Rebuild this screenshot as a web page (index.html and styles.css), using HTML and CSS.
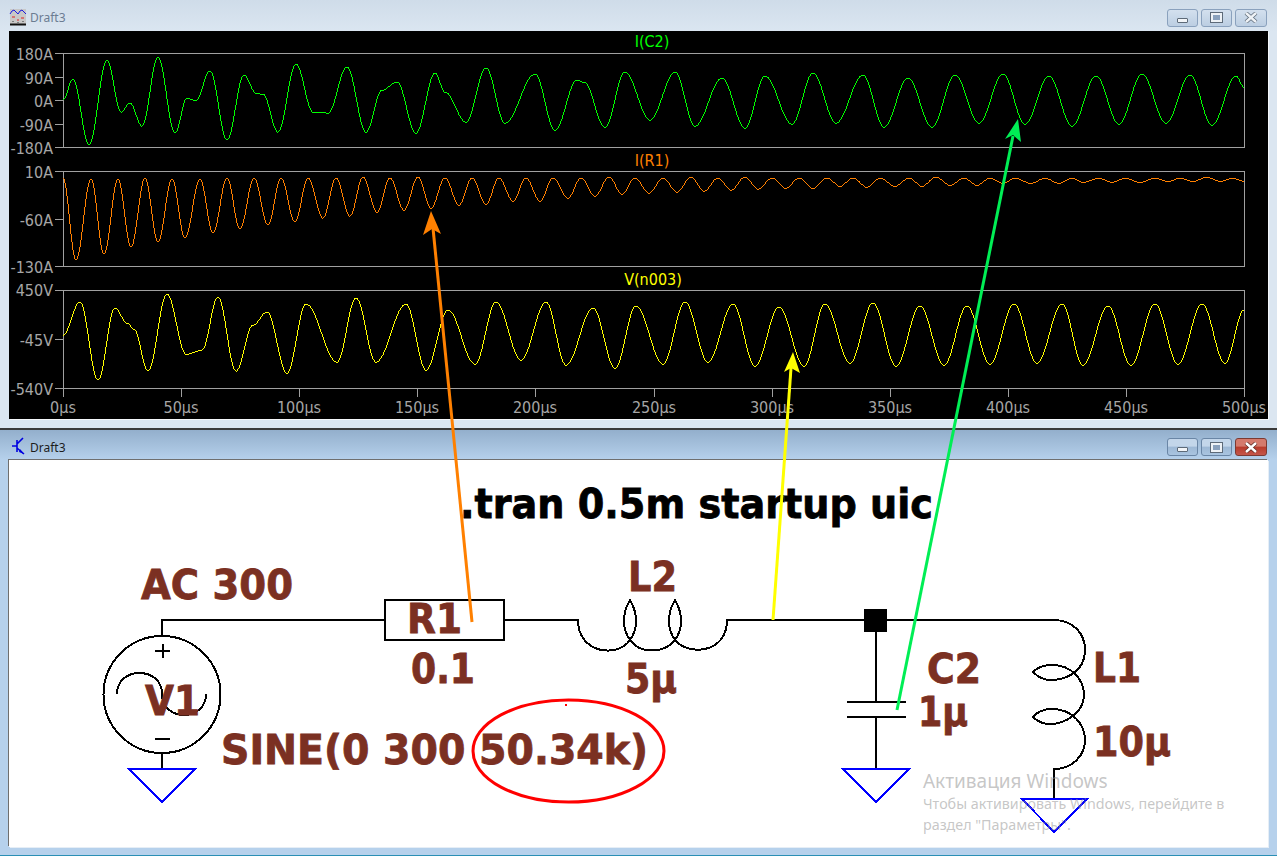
FILE: index.html
```html
<!DOCTYPE html>
<html lang="en">
<head>
  <meta charset="UTF-8" />
  <meta name="viewport" content="width=device-width, initial-scale=1" />
  <title>Draft3</title>
  <link rel="stylesheet" href="styles.css">
</head>
<body>

  <!-- Waveform viewer -->
  <section class="window window-inactive">
    <header class="titlebar">
      <svg class="title-icon" width="18" height="18" viewBox="0 0 18 18">
        <rect x="1" y="1" width="16" height="15" fill="#c8c8c8" />
        <path d="M1 6 L3 3 L5 2 L7 4 L9 6 L11 3 L13 2 L15 4 L17 6" fill="none" stroke="#1a1ae0" />
        <path d="M3 9 H6 M8 12 H10 M12 10 H15" stroke="#e02020" />
        <path d="M1 16.5 H17" stroke="#111" stroke-width="2" />
        <path d="M4 13 V14 M9 14 V15 M14 13 V14" stroke="#333" />
      </svg>
      <span class="title-text">Draft3</span>
      <div class="controls">
        <button class="ctl"><span class="glyph-min"></span></button>
        <button class="ctl"><span class="glyph-max"></span></button>
        <button class="ctl ctl-close">
          <svg width="16" height="11" viewBox="0 0 16 11"><path d="M3 1 L13 10 M13 1 L3 10" stroke="#5d6a78" stroke-width="4" /><path d="M3 1 L13 10 M13 1 L3 10" stroke="#eef2f6" stroke-width="2.4" /></svg>
        </button>
      </div>
    </header>
    <div class="client client-plot">
      <svg class="canvas" width="1258" height="388" viewBox="9 31 1258 388">
        <!-- frames -->
        <g class="axis">
          <rect x="63.5" y="53.5" width="1181" height="94" />
          <rect x="63.5" y="171.5" width="1181" height="95" />
          <rect x="63.5" y="290.5" width="1181" height="98" />
          <path d="M55 53.5H63 M55 77.5H63 M55 100.5H63 M55 124.5H63 M55 147.5H63" />
          <path d="M55 171.5H63 M55 219.5H63 M55 266.5H63" />
          <path d="M55 290.5H63 M55 339.5H63 M55 388.5H63" />
          <path d="M63.5 388V397 M181.5 388V397 M299.5 388V397 M417.5 388V397 M535.5 388V397 M654.5 388V397 M772.5 388V397 M890.5 388V397 M1008.5 388V397 M1126.5 388V397 M1244.5 388V397" />
        </g>

        <path id="traceC2" class="trace" stroke="#00ff00" />
        <path id="traceR1" class="trace" stroke="#ff8000" />
        <path id="traceN003" class="trace" stroke="#ffff00" />

        <g class="plot-label plot-title">
          <text x="652" y="47" fill="#00ff00">I(C2)</text>
          <text x="652" y="166" fill="#ff8000">I(R1)</text>
          <text x="653" y="285" fill="#ffff00">V(n003)</text>
        </g>
        <g class="plot-label y-label">
          <text x="53" y="60">180A</text>
          <text x="53" y="84">90A</text>
          <text x="53" y="107">0A</text>
          <text x="53" y="131">-90A</text>
          <text x="53" y="154">-180A</text>
          <text x="53" y="178">10A</text>
          <text x="53" y="226">-60A</text>
          <text x="53" y="273">-130A</text>
          <text x="53" y="296">450V</text>
          <text x="53" y="346">-45V</text>
          <text x="53" y="395">-540V</text>
        </g>
        <g class="plot-label x-label">
          <text x="63" y="413">0µs</text>
          <text x="181" y="413">50µs</text>
          <text x="299" y="413">100µs</text>
          <text x="417" y="413">150µs</text>
          <text x="535" y="413">200µs</text>
          <text x="654" y="413">250µs</text>
          <text x="772" y="413">300µs</text>
          <text x="890" y="413">350µs</text>
          <text x="1008" y="413">400µs</text>
          <text x="1126" y="413">450µs</text>
          <text x="1244" y="413">500µs</text>
        </g>
      </svg>
    </div>
  </section>

  <!-- Schematic editor -->
  <section class="window window-active">
    <header class="titlebar">
      <svg class="title-icon" width="18" height="18" viewBox="0 0 18 18">
        <path d="M3 9 H8 M8 3 V15 M8 7 L14 1 M8 11 L15 17" fill="none" stroke="#0000e0" stroke-width="1.6" />
        <path d="M11 12 L15 17 L10 15 Z" fill="#0000e0" />
      </svg>
      <span class="title-text">Draft3</span>
      <div class="controls">
        <button class="ctl"><span class="glyph-min"></span></button>
        <button class="ctl"><span class="glyph-max"></span></button>
        <button class="ctl ctl-close">
          <svg width="16" height="11" viewBox="0 0 16 11"><path d="M3 1 L13 10 M13 1 L3 10" stroke="#5d2a22" stroke-width="4" /><path d="M3 1 L13 10 M13 1 L3 10" stroke="#fff" stroke-width="2.4" /></svg>
        </button>
      </div>
    </header>
    <div class="client client-sheet">
      <svg class="canvas" width="1258" height="387" viewBox="9 460 1258 387">
        <g class="wire">
          <path d="M385 620 H162 V636 M162 753 V769" />
          <circle cx="162" cy="694.5" r="58.5" />
          <path d="M155 651 H170 M162.500 644 V658 M155 739 H170" />
          <path d="M117 694 C117 666 162 666 162 694 C162 722 206 722 206 694" />
          <rect x="385" y="600" width="119" height="40" />
          <!-- L2 -->
          <path d="M504 620 H578 C578 654 618 658 630 640 C640 626 636 610 630 600 C624 610 620 626 630 640 C640 654 664 654 675 640 C685 626 681 610 675 600 C669 610 665 626 675 640 C688 656 727 654 727 620 H1053" />
          <!-- L1 -->
          <path d="M1053 620 C1074 620 1085 634 1085 650 C1085 672 1066 680 1050 680 C1042 680 1037 676 1033 672 C1037 668 1044 665 1052 665 C1072 665 1084 680 1084 695 C1084 712 1066 724 1050 724 C1042 724 1037 721 1033 717 C1037 712 1044 709 1052 709 C1072 709 1085 724 1085 740 C1085 756 1072 769 1054 769 V799" />
          <!-- C2 -->
          <path d="M875.500 620 V702 M847 702 H906 M847 717 H906 M875.500 717 V769" />
        </g>
        <rect class="junction" x="864" y="609" width="23" height="23" />

        <g class="ground">
          <path d="M129 769 H195 L162 802 Z" />
          <path d="M843 769 H909 L876 802 Z" />
          <path d="M1022 799 H1087 L1054 832 Z" />
        </g>

        <ellipse class="marker" cx="568.500" cy="751" rx="95.500" ry="51" />
        <rect x="565" y="704" width="2" height="2" fill="#ff0000" />

        <text class="directive" x="460" y="518" textLength="473" lengthAdjust="spacingAndGlyphs">.tran 0.5m startup uic</text>
        <g class="part-label">
          <text x="141" y="599" textLength="152" lengthAdjust="spacingAndGlyphs">AC 300</text>
          <text x="407" y="633" textLength="55" lengthAdjust="spacingAndGlyphs">R1</text>
          <text x="411" y="683" textLength="64" lengthAdjust="spacingAndGlyphs">0.1</text>
          <text x="628" y="591" textLength="49" lengthAdjust="spacingAndGlyphs">L2</text>
          <text x="625" y="693" textLength="52" lengthAdjust="spacingAndGlyphs">5µ</text>
          <text x="145" y="715" textLength="55" lengthAdjust="spacingAndGlyphs">V1</text>
          <text x="221" y="764" textLength="427" lengthAdjust="spacingAndGlyphs">SINE(0 300 50.34k)</text>
          <text x="927" y="683" textLength="54" lengthAdjust="spacingAndGlyphs">C2</text>
          <text x="918" y="726" textLength="50" lengthAdjust="spacingAndGlyphs">1µ</text>
          <text x="1093" y="682" textLength="48" lengthAdjust="spacingAndGlyphs">L1</text>
          <text x="1093" y="756" textLength="78" lengthAdjust="spacingAndGlyphs">10µ</text>
        </g>
      </svg>
    </div>
  </section>

  <!-- Probe arrows run across both windows -->
  <svg class="probes" width="1277" height="856" viewBox="0 0 1277 856">
    <path d="M472 622 L433 228" stroke="#ff8000" />
    <path d="M431 211 L441 234 L432 229 L423 235 Z" fill="#ff8000" />
    <path d="M773 620 L791 368" stroke="#ffff00" />
    <path d="M793 352 L800 373 L791 368 L784 372 Z" fill="#ffff00" />
    <path d="M897 710 L1013 136" stroke="#00ee55" />
    <path d="M1018 119 L1021 142 L1013 135 L1005 139 Z" fill="#00ee55" />
  </svg>

  <div class="activation">
    <div class="activation-title">Активация Windows</div>
    <div>Чтобы активировать Windows, перейдите в</div>
    <div>раздел "Параметры".</div>
  </div>

  <script src="waveforms.js"></script>
</body>
</html>
```

FILE: styles.css
```css
html, body {
  margin: 0;
  padding: 0;
}

body {
  position: relative;
  display: flex;
  flex-direction: column;
  gap: 2px;
  width: 1277px;
  height: 856px;
  overflow: hidden;
  background-color: #3a3a3a;
  font-family: 'Noto Sans', 'Open Sans', sans-serif;
}

.window {
  display: flex;
  flex-direction: column;
  box-sizing: border-box;
  padding: 0 9px;
}

.window-inactive {
  height: 428px;
  background: linear-gradient(#cfdce9 0, #dbe6f1 32px);
}

.window-active {
  height: 426px;
  background: linear-gradient(#93afcc 0, #b6d1ec 30px);
  border-bottom: 1px solid #2a8fb5;
}

.titlebar {
  display: flex;
  align-items: center;
  gap: 3px;
  flex-shrink: 0;
}

.window-inactive .titlebar {
  height: 31px;
}

.window-active .titlebar {
  height: 30px;
}

.title-text {
  font-size: 12px;
  padding-top: 4px;
}

.window-inactive .title-text {
  color: #6b7c92;
}

.window-active .title-text {
  color: #1c1c1c;
}

.title-icon {
  flex-shrink: 0;
  margin-top: 2px;
}

.controls {
  display: flex;
  gap: 3px;
  margin-left: auto;
  margin-right: 1px;
  padding-top: 4px;
}

.ctl {
  display: flex;
  align-items: center;
  justify-content: center;
  box-sizing: border-box;
  width: 31px;
  height: 18px;
  padding: 0;
  border: 1px solid #8aa1bd;
  border-radius: 3px;
  background: linear-gradient(#d3e0ee, #bccee2);
}

.window-active .ctl {
  border-color: #6a86a6;
  background: linear-gradient(#c3d6ea 45%, #9db8d5 50%, #a9c4e0);
}

.window-active .ctl-close {
  width: 32px;
  border-color: #7c3a32;
  background: linear-gradient(#d47a6c 45%, #b83a2a 50%, #c4564a);
}

.window-inactive .ctl-close {
  width: 32px;
}

.glyph-min {
  display: block;
  box-sizing: border-box;
  width: 11px;
  height: 5px;
  margin-top: 5px;
  border: 1px solid #5d6a78;
  border-radius: 1px;
  background: #f2f5f8;
}

.glyph-max {
  display: block;
  box-sizing: border-box;
  width: 11px;
  height: 9px;
  border: 2px solid #eef2f6;
  outline: 1px solid #5d6a78;
  background: #8aa1bd;
}

.client {
  flex-shrink: 0;
  line-height: 0;
}

.client-plot {
  height: 388px;
  background-color: #000;
  box-shadow: 1px 1px 0 #f4f7fa;
}

.client-sheet {
  height: 387px;
  background-color: #fff;
  box-shadow: -1px -1px 0 #6f6f6f, 1px 1px 0 #e6eef6;
}

.canvas {
  display: block;
}

/* plot pane */
.axis rect,
.axis path {
  fill: none;
  stroke: #a0a0a0;
  stroke-width: 1;
  shape-rendering: crispEdges;
}

.trace {
  fill: none;
  stroke-width: 1;
  shape-rendering: crispEdges;
}

.plot-label {
  font-family: 'DejaVu Sans', sans-serif;
  font-size: 16px;
  font-stretch: condensed;
}

.plot-title,
.x-label {
  text-anchor: middle;
}

.y-label {
  text-anchor: end;
}

.y-label,
.x-label {
  fill: #a6a6a6;
}

/* schematic pane */
.wire * {
  fill: none;
  stroke: #000;
  stroke-width: 2;
  shape-rendering: crispEdges;
}

.junction {
  fill: #000;
}

.ground path {
  fill: none;
  stroke: #0000ff;
  stroke-width: 2;
  shape-rendering: crispEdges;
}

.marker {
  fill: none;
  stroke: #ff0000;
  stroke-width: 3;
}

.directive,
.part-label {
  font-family: 'DejaVu Sans', sans-serif;
  font-size: 40px;
  font-weight: bold;
  stroke-width: 0.8;
}

.directive {
  fill: #000;
  stroke: #000;
}

.part-label {
  fill: #7b3022;
  stroke: #7b3022;
}

/* overlays */
.probes {
  position: absolute;
  top: 0;
  left: 0;
  pointer-events: none;
}

.probes path {
  stroke-width: 3;
}

.probes path[fill] {
  stroke-width: 0;
}

.activation {
  position: absolute;
  top: 769px;
  left: 923px;
  font-size: 14.3px;
  line-height: 21px;
  color: rgba(150, 150, 150, 0.55);
  white-space: nowrap;
}

.activation-title {
  font-size: 19px;
  line-height: 24px;
}
```

FILE: waveforms.js
```js
// Turning points of each trace, as [x, y] in window pixels
const traces = {
  traceC2: [
    [63,100],[73,79],[89,145],[107,60],[121,112],[130,103],[142,126],[158,57],[175,133],[187,98],[196,100],
    [210,71],[227,140],[244,75],[256,93],[263,94],[278,132],[296,64],[313,112],[323,112],[328,113],[347,67],
    [366,132],[382,90],[397,82],[416,133],[435,73],[445,92],[466,122],[486,68],[505,123],[535,74],[555,130],
    [577,80],[584,82],[605,127],[625,72],[650,120],[675,72],[695,126],[722,78],[745,128],[765,76],[792,124],
    [813,73],[836,123],[863,75],[884,127],[908,78],[932,127],[955,75],[979,123],[1003,74],[1025,124],[1049,76],
    [1072,126],[1096,76],[1119,124],[1142,74],[1166,123],[1190,75],[1212,125],[1236,76],[1244,87]
  ],
  traceR1: [
    [63,178],[76,260],[91,179],[104,254],[118,179],[131,247],[145,178],[158,242],[172,179],[185,238],[200,179],
    [213,233],[227,178],[240,229],[254,178],[268,225],[281,178],[295,222],[308,178],[323,218],[336,178],[350,216],
    [363,177],[377,212],[390,178],[404,210],[418,177],[431,208],[445,178],[459,205],[472,178],[486,204],[499,178],
    [513,201],[526,178],[540,201],[553,178],[568,198],[581,178],[595,196],[609,177],[622,194],[635,178],[649,193],
    [663,178],[677,192],[691,177],[704,191],[718,178],[731,190],[745,177],[758,189],[772,178],[786,188],[799,178],
    [813,188],[827,178],[840,186],[853,178],[867,187],[880,178],[895,186],[909,178],[922,186],[936,177],[950,185],
    [964,178],[977,185],[990,178],[1003,183],[1015,178],[1031,183],[1045,178],[1059,183],[1072,178],[1083,182],
    [1099,178],[1112,182],[1125,178],[1140,182],[1155,178],[1168,181],[1180,178],[1193,181],[1207,177],[1220,181],
    [1233,178],[1244,181]
  ],
  traceN003: [
    [63,335],[80,302],[98,380],[115,308],[127,323],[134,329],[148,371],[167,294],[186,354],[202,350],[218,297],
    [236,371],[253,325],[267,312],[287,373],[306,304],[337,362],[356,298],[376,362],[406,304],[426,370],[448,310],
    [475,364],[496,302],[521,360],[546,302],[566,365],[593,308],[615,368],[636,306],[663,364],[685,302],[708,362],
    [733,304],[755,366],[779,307],[804,366],[825,304],[850,363],[873,303],[896,366],[920,306],[944,365],[967,306],
    [990,364],[1014,304],[1037,363],[1062,304],[1083,365],[1108,306],[1131,365],[1155,304],[1178,364],[1202,304],
    [1225,363],[1244,310]
  ]
};

// Ease between turning points, one sample per pixel column
function buildPath(points) {
  let d = `M${points[0][0]} ${points[0][1]}`;
  for (let i = 1; i < points.length; i++) {
    const [x0, y0] = points[i - 1];
    const [x1, y1] = points[i];
    for (let x = x0 + 1; x <= x1; x++) {
      const t = (x - x0) / (x1 - x0);
      const y = y0 + (y1 - y0) * (1 - Math.cos(Math.PI * t)) / 2;
      d += `L${x} ${Math.round(y)}`;
    }
  }
  return d;
}

Object.keys(traces).forEach(id => {
  document.getElementById(id).setAttribute('d', buildPath(traces[id]));
});
```
